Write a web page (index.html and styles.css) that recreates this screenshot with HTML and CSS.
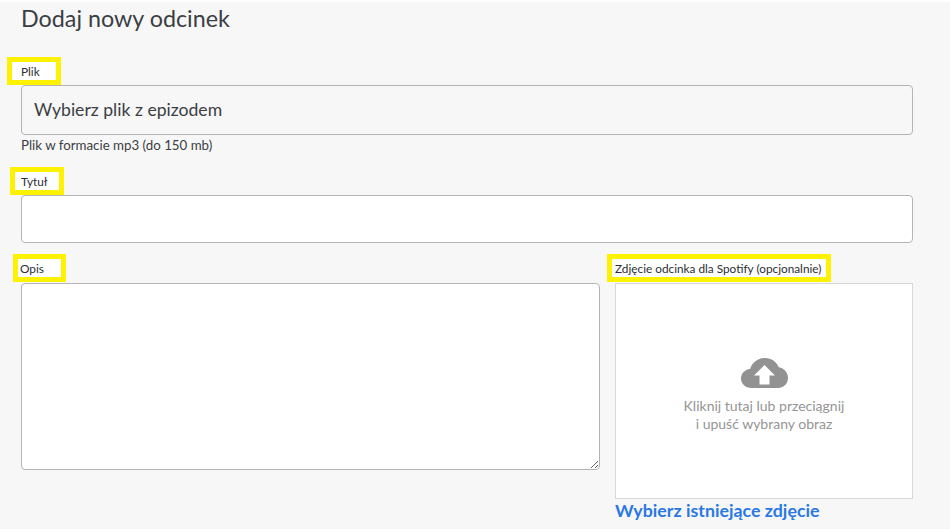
FILE: index.html
```html
<!DOCTYPE html>
<html lang="pl">
<head>
    <meta charset="UTF-8">
    <title>Dodaj nowy odcinek</title>
    <link rel="stylesheet" href="styles.css">
</head>
<body>
    <main class="page">
        <h1>Dodaj nowy odcinek</h1>

        <form class="episode-form">
            <label class="mark mark-file" for="file">Plik</label>
            <div class="file-box" id="file">Wybierz plik z epizodem</div>
            <p class="hint">Plik w formacie mp3 (do 150 mb)</p>

            <label class="mark mark-title" for="title">Tytuł</label>
            <input type="text" id="title">

            <div class="columns">
                <div class="col-desc">
                    <label class="mark mark-desc" for="desc">Opis</label>
                    <textarea id="desc"></textarea>
                </div>
                <div class="col-image">
                    <label class="mark mark-image">Zdjęcie odcinka dla Spotify (opcjonalnie)</label>
                    <div class="dropzone">
                        <svg class="cloud" width="47" height="30" viewBox="0 0 47 30">
                            <path fill="#929292" d="M10.500 30C4.500 30 0 25.800 0 20.500C0 15.500 3.800 11.500 9 11C11.500 4.300 17 0 24 0C30.500 0 35.500 3.700 37.800 9.300C43.300 10.300 47 14.800 47 20C47 25.800 42.500 30 37 30Z"/>
                            <path fill="#fff" d="M23.500 7L34 17.500H28.500V26.500H18.500V17.500H13Z"/>
                        </svg>
                        <p>Kliknij tutaj lub przeciągnij<br>i upuść wybrany obraz</p>
                    </div>
                    <a class="pick-link" href="#">Wybierz istniejące zdjęcie</a>
                </div>
            </div>
        </form>
    </main>
</body>
</html>
```

FILE: styles.css
```css
html, body {
    margin: 0;
    padding: 0;
    height: 100%;
    overflow: hidden;
    background: #fff;
}

body {
    font-family: Lato, "Open Sans", sans-serif;
    color: #3b3e44;
    padding-top: 2px;
    box-sizing: border-box;
}

.page {
    background: #f7f7f7;
    height: 527px;
    padding: 0 37px 0 21px;
    box-sizing: border-box;
}

h1 {
    margin: 0;
    padding-top: 2px;
    font-size: 23.3px;
    line-height: 29px;
    font-weight: 400;
}

.episode-form {
    display: flex;
    flex-direction: column;
    align-items: flex-start;
    padding-top: 24px;
}

.mark {
    display: block;
    box-sizing: border-box;
    height: 28px;
    border: 5px solid #fff200;
    background: #fff;
    font-size: 11.8px;
    line-height: 20px;
    color: #2b2e33;
}

.mark-file {
    width: 54px;
    margin-left: -14px;
    padding-left: 9px;
}

.mark-title {
    width: 54px;
    margin-left: -11px;
    padding-left: 6px;
}

.mark-desc {
    width: 53px;
    margin-left: -8px;
    padding-left: 2px;
}

.mark-image {
    width: 224px;
    margin-left: -8px;
    padding-left: 3px;
    white-space: nowrap;
}

.file-box,
input,
textarea {
    display: block;
    box-sizing: border-box;
    width: 100%;
    border: 1px solid #b4b4b4;
    border-radius: 4px;
}

.file-box {
    height: 50px;
    padding: 0 12px;
    background: #f7f7f7;
    font-size: 17.6px;
    line-height: 48px;
}

.hint {
    margin: 1px 0 0;
    font-size: 13.3px;
    line-height: 18px;
    height: 31px;
}

input {
    height: 48px;
    background: #fff;
}

.columns {
    display: flex;
    width: 100%;
    gap: 15px;
    margin-top: 11px;
}

.col-desc {
    width: 579px;
}

.col-image {
    width: 298px;
}

textarea {
    height: 187px;
    margin: 1px 0 0;
    background: #fff;
}

.dropzone {
    box-sizing: border-box;
    height: 216px;
    margin-top: 1px;
    padding-top: 74px;
    border: 1px solid #d8d8d8;
    background: #fff;
    text-align: center;
    color: #959595;
}

.cloud {
    display: block;
    margin: 0 auto;
}

.dropzone p {
    margin: 9px 0 0;
    font-size: 14px;
    line-height: 18px;
}

.pick-link {
    display: block;
    margin-top: 1px;
    font-size: 17.8px;
    line-height: 21px;
    font-weight: 700;
    color: #2a78e4;
    text-decoration: none;
}
```
